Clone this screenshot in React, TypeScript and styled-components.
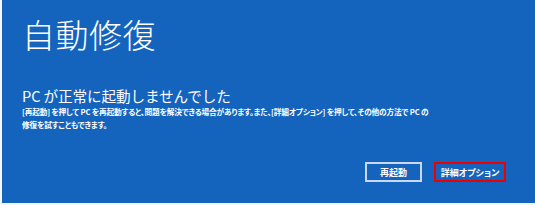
import styled, { createGlobalStyle } from "styled-components";

const GlobalStyle = createGlobalStyle`
  html, body {
    margin: 0;
    padding: 0;
    background: #ffffff;
  }
  body {
    font-family: "Noto Sans CJK JP", "Noto Sans", sans-serif;
  }
`;

function App() {
  return (
    <Frame>
      <GlobalStyle />
      <Screen>
        <Title>自動修復</Title>
        <Heading>PC が正常に起動しませんでした</Heading>
        <Body>
          [再起動] を押して PC を再起動すると、問題を解決できる場合があります。また、[詳細オプション] を押して、その他の方法で PC の
          <br />
          修復を試すこともできます。
        </Body>
        <Actions>
          <ActionButton $width={57}>再起動</ActionButton>
          <ActionButton $width={72} $highlight>
            詳細オプション
          </ActionButton>
        </Actions>
      </Screen>
    </Frame>
  );
}

const Frame = styled.div`
  width: 535px;
  height: 205px;
  padding: 0 0 2px 2px;
  box-sizing: border-box;
  background: #f4f6f9;
  display: flex;
  overflow: hidden;
`;

const Screen = styled.main`
  flex: 1;
  min-width: 0;
  background: #1464be;
  color: #ffffff;
  display: flex;
  flex-direction: column;
  padding: 18px 29px 0 20px;
`;

const Title = styled.h1`
  margin: 0;
  font-size: 33px;
  line-height: 33px;
  font-weight: 300;
  letter-spacing: 0.5px;
`;

const Heading = styled.h2`
  margin: 36px 0 0;
  font-size: 14.6px;
  line-height: 17px;
  font-weight: 400;
  letter-spacing: -0.1px;
`;

const Body = styled.p`
  margin: 1px 0 0;
  font-size: 7.7px;
  line-height: 13px;
  font-weight: 700;
  letter-spacing: -0.2px;
  font-feature-settings: "palt";
  white-space: nowrap;
`;

const Actions = styled.div`
  margin-top: 31px;
  display: flex;
  justify-content: flex-end;
  gap: 12px;
`;

const ActionButton = styled.button<{ $highlight?: boolean; $width: number }>`
  width: ${(p) => p.$width}px;
  height: 20px;
  padding: 0;
  box-sizing: border-box;
  background: transparent;
  border: 2px solid ${(p) => (p.$highlight ? "#ee0000" : "#c9d8ee")};
  color: #ffffff;
  font-family: "Noto Sans CJK JP", sans-serif;
  font-size: 9px;
  font-weight: 700;
  font-feature-settings: "palt";
  line-height: 1;
  display: flex;
  align-items: center;
  justify-content: center;
`;

export default App;
